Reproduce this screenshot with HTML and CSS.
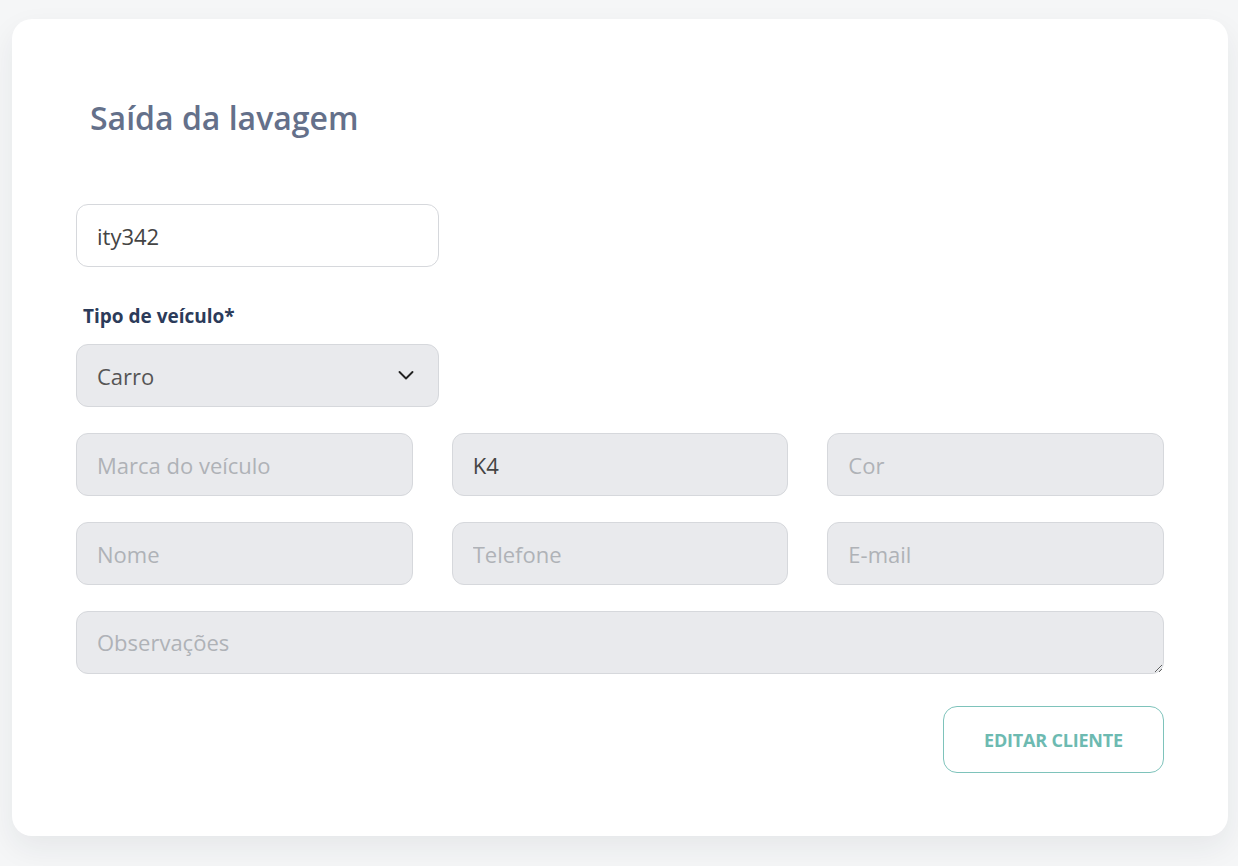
FILE: index.html
```html
<!DOCTYPE html>
<html lang="pt-BR">
<head>
<meta charset="utf-8">
<title>Saída da lavagem</title>
<link rel="stylesheet" href="styles.css">
</head>
<body>
<main class="card">
  <h1 class="title">Saída da lavagem</h1>
  <form class="form">
    <input class="field field-white field-plate" type="text" value="ity342">
    <div class="group">
      <label class="label">Tipo de veículo*</label>
      <div class="select-wrap">
        <select class="field field-select">
          <option>Carro</option>
        </select>
        <svg class="chevron" width="18" height="18" viewBox="0 0 18 18"><path d="M2.5 6 L9 12.5 L15.5 6" fill="none" stroke="#222" stroke-width="1.9" stroke-linecap="round" stroke-linejoin="round"/></svg>
      </div>
    </div>
    <div class="grid">
      <input class="field" type="text" placeholder="Marca do veículo">
      <input class="field" type="text" value="K4">
      <input class="field" type="text" placeholder="Cor">
      <input class="field" type="text" placeholder="Nome">
      <input class="field" type="text" placeholder="Telefone">
      <input class="field" type="text" placeholder="E-mail">
    </div>
    <textarea class="field field-area" placeholder="Observações"></textarea>
    <div class="actions">
      <button type="button" class="btn">EDITAR CLIENTE</button>
    </div>
  </form>
</main>
</body>
</html>
```

FILE: styles.css
```css
html, body {
  margin: 0;
  padding: 0;
  background: #f5f6f7;
  font-family: "Open Sans", "Noto Sans", sans-serif;
}
body {
  padding: 19px 10px 30px 12px;
  height: 866px;
  box-sizing: border-box;
  overflow: hidden;
}
.card {
  background: #ffffff;
  border-radius: 20px;
  box-shadow: 0 12px 30px rgba(30, 40, 60, 0.07);
  padding: 79px 64px 63px 64px;
  height: 817px;
  box-sizing: border-box;
}
.title {
  margin: 0 0 66px 14px;
  font-size: 32px;
  font-weight: 600;
  color: #64708a;
  line-height: 40px;
}
.form {
  display: flex;
  flex-direction: column;
}
.field {
  box-sizing: border-box;
  height: 63px;
  border: 1px solid #d6d8dc;
  border-radius: 12px;
  background: #e9eaed;
  padding: 0 20px;
  font-family: "Open Sans", "Noto Sans", sans-serif;
  font-size: 22px;
  color: #444;
  outline: none;
  width: 100%;
}
.field::placeholder {
  color: #afb2b7;
}
.field-white {
  background: #ffffff;
}
.field-plate {
  width: 363px;
}
.group {
  margin-top: 37px;
  display: flex;
  flex-direction: column;
}
.label {
  font-size: 19px;
  font-weight: 700;
  color: #2c3b5a;
  margin: 0 0 16px 7px;
  line-height: 24px;
}
.select-wrap {
  position: relative;
  width: 363px;
}
.field-select {
  appearance: none;
  -webkit-appearance: none;
  color: #555;
}
.chevron {
  position: absolute;
  right: 24px;
  top: 22px;
  pointer-events: none;
}
.grid {
  margin-top: 26px;
  display: grid;
  grid-template-columns: repeat(3, 1fr);
  column-gap: 39px;
  row-gap: 26px;
}
.field-area {
  margin-top: 26px;
  resize: vertical;
  padding-top: 15px;
  line-height: 30px;
}
.actions {
  margin-top: 32px;
  display: flex;
  justify-content: flex-end;
}
.btn {
  width: 221px;
  height: 67px;
  border: 1px solid #7ec3bb;
  border-radius: 14px;
  background: #ffffff;
  color: #6dbab1;
  font-family: "Open Sans", "Noto Sans", sans-serif;
  font-size: 18px;
  font-weight: 700;
  letter-spacing: -0.2px;
  cursor: pointer;
}
```
